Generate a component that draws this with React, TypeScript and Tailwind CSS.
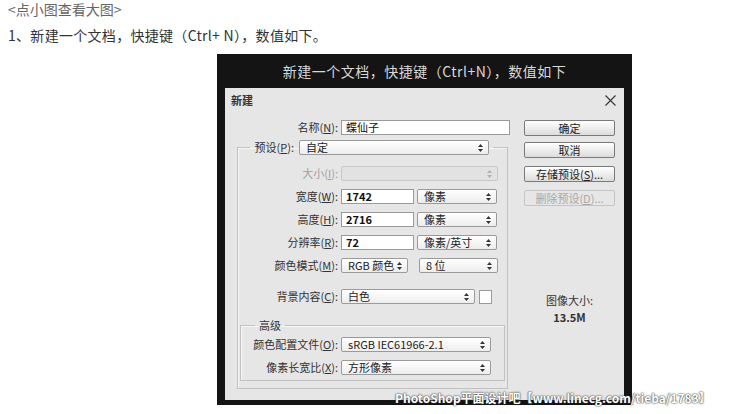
import React from "react";

const cjk = { fontFamily: '"Noto Sans CJK SC", "Noto Sans", sans-serif' };

function Arrows({ disabled }: { disabled?: boolean }) {
  const c = disabled ? "#b0b0b0" : "#333";
  return (
    <svg width="5" height="8" viewBox="0 0 5 8" className="shrink-0">
      <path d="M0 3 L2.5 0 L5 3 Z" fill={c} />
      <path d="M0 5 L2.5 8 L5 5 Z" fill={c} />
    </svg>
  );
}

function Select({ w, text, disabled }: { w: string; text?: string; disabled?: boolean }) {
  return (
    <div
      className={`${w} h-[15px] shrink-0 flex items-center justify-between pl-[6px] pr-[5px] rounded-[2px] border ${
        disabled
          ? "border-[#c8c8c8] bg-[#e2e2e2]"
          : "border-[#9a9a9a] bg-gradient-to-b from-white to-[#ededed]"
      } text-[11px] leading-none text-[#222] whitespace-nowrap`}
    >
      <span>{text}</span>
      <Arrows disabled={disabled} />
    </div>
  );
}

function Input({ w, text, bold = true }: { w: string; text: string; bold?: boolean }) {
  return (
    <div className={`${w} h-[15px] shrink-0 flex items-center pl-[4px] bg-white border border-[#9a9a9a] text-[11px] leading-none text-[#111] ${bold ? "font-semibold" : "font-normal"}`}>
      {text}
    </div>
  );
}

function Label({ w, children, disabled }: { w: string; children: React.ReactNode; disabled?: boolean }) {
  return (
    <div className={`${w} shrink-0 whitespace-nowrap text-right text-[11px] leading-none ${disabled ? "text-[#a0a0a0]" : "text-[#333]"}`}>
      {children}
    </div>
  );
}

function Btn({ children, disabled }: { children: React.ReactNode; disabled?: boolean }) {
  return (
    <div
      className={`w-[91px] h-[16px] flex items-center justify-center rounded-[2px] border text-[11px] leading-none whitespace-nowrap ${
        disabled
          ? "border-[#c4c4c4] text-[#a8a8a8] bg-[#e6e6e6]"
          : "border-[#7a7a7a] text-[#222] bg-gradient-to-b from-white to-[#dcdcdc]"
      }`}
    >
      {children}
    </div>
  );
}

export default function App() {
  return (
    <div className="relative w-[750px] h-[414px] bg-white overflow-hidden" style={cjk}>
      <div className="pl-[8px] pt-[1px] text-[14px] leading-[17px] text-[#666]">&lt;点小图查看大图&gt;</div>
      <div className="pl-[8px] mt-[9px] text-[14px] leading-[17px] text-[#333] tracking-[0.3px]">1、新建一个文档，快捷键（Ctrl+ N），数值如下。</div>

      <div className="ml-[217px] mt-[10px] w-[415px] h-[351px] bg-[#141414] px-[8px] pb-[5px] flex flex-col">
        <div className="h-[34px] flex items-center justify-center text-[14px] text-[#d8d8d8] tracking-[0.5px]">
          新建一个文档，快捷键（Ctrl+N），数值如下
        </div>
        <div className="flex-1 bg-[#e6e6e6] flex flex-col">
          <div className="h-[24px] flex items-center justify-between pl-[6px] pr-[8px]">
            <span className="text-[11px] font-bold text-[#333]">新建</span>
            <svg width="11" height="11" viewBox="0 0 11 11">
              <path d="M0.5 0.5 L10.5 10.5 M10.5 0.5 L0.5 10.5" stroke="#333" strokeWidth="1.1" />
            </svg>
          </div>
          <div className="flex pt-[8px]">
            {/* left column */}
            <div className="w-[298px] flex flex-col">
              <div className="flex items-center gap-[3px]">
                <Label w="w-[113px]">名称(<u>N</u>):</Label>
                <Input w="w-[169px]" text="蝶仙子" bold={false} />
              </div>
              <fieldset className="ml-[12px] mt-[5px] w-[271px] border border-[#c2c2c2] shadow-[inset_1px_1px_0_#f6f6f6] pb-[7px]">
                <legend className="ml-[12px] pr-[4px] flex items-center gap-[5px]">
                  <Label w="w-[44px]">预设(<u>P</u>):</Label>
                  <Select w="w-[190px]" text="自定" />
                </legend>
                <div className="flex flex-col gap-[8px] mt-[11px]">
                  <div className="flex items-center gap-[3px]">
                    <Label w="w-[100px]" disabled>大小(<u>I</u>):</Label>
                    <Select w="w-[157px]" disabled />
                  </div>
                  <div className="flex items-center gap-[3px]">
                    <Label w="w-[100px]">宽度(<u>W</u>):</Label>
                    <Input w="w-[73px]" text="1742" />
                    <Select w="w-[80px]" text="像素" />
                  </div>
                  <div className="flex items-center gap-[3px]">
                    <Label w="w-[100px]">高度(<u>H</u>):</Label>
                    <Input w="w-[73px]" text="2716" />
                    <Select w="w-[80px]" text="像素" />
                  </div>
                  <div className="flex items-center gap-[3px]">
                    <Label w="w-[100px]">分辨率(<u>R</u>):</Label>
                    <Input w="w-[73px]" text="72" />
                    <Select w="w-[80px]" text="像素/英寸" />
                  </div>
                  <div className="flex items-center gap-[3px]">
                    <Label w="w-[100px]">颜色模式(<u>M</u>):</Label>
                    <Select w="w-[67px]" text="RGB 颜色" />
                    <div className="w-[5px]" />
                    <Select w="w-[79px]" text="8 位" />
                  </div>
                  <div className="flex items-center gap-[3px] mt-[8px]">
                    <Label w="w-[100px]">背景内容(<u>C</u>):</Label>
                    <Select w="w-[134px]" text="白色" />
                    <div className="ml-[1px] w-[13px] h-[14px] bg-white border border-[#9a9a9a]" />
                  </div>
                </div>
                <fieldset className="mx-[2px] mt-[15px] border border-[#c2c2c2] shadow-[inset_1px_1px_0_#f6f6f6] pb-[5px]">
                  <legend className="ml-[14px] px-[4px] text-[11px] leading-[12px] text-[#333]">高级</legend>
                  <div className="flex flex-col gap-[8px] mt-[6px]">
                    <div className="flex items-center gap-[3px]">
                      <Label w="w-[97px]">颜色配置文件(<u>O</u>):</Label>
                      <Select w="w-[150px]" text="sRGB IEC61966-2.1" />
                    </div>
                    <div className="flex items-center gap-[3px]">
                      <Label w="w-[97px]">像素长宽比(<u>X</u>):</Label>
                      <Select w="w-[150px]" text="方形像素" />
                    </div>
                  </div>
                </fieldset>
              </fieldset>
            </div>
            {/* right column */}
            <div className="flex-1 flex flex-col items-end pr-[9px]">
              <div className="flex flex-col gap-[6px]">
                <Btn>确定</Btn>
                <Btn>取消</Btn>
                <div className="mt-[2px]"><Btn>存储预设(<u>S</u>)...</Btn></div>
                <div className="mt-[2px]"><Btn disabled>删除预设(<u>D</u>)...</Btn></div>
              </div>
              <div className="w-[91px] mt-[89px] flex flex-col items-center text-[11px] leading-none text-[#333]">
                <span>图像大小:</span>
                <span className="mt-[6px] font-semibold">13.5M</span>
              </div>
            </div>
          </div>
        </div>
      </div>

      <div className="absolute left-[395px] top-[390px] text-[12px] font-bold leading-[15px] text-white whitespace-nowrap [text-shadow:0_0_2px_#333,0_0_1px_#333]">
        PhotoShop平面设计吧【www.linecg.com/tieba/1783】
      </div>
    </div>
  );
}
